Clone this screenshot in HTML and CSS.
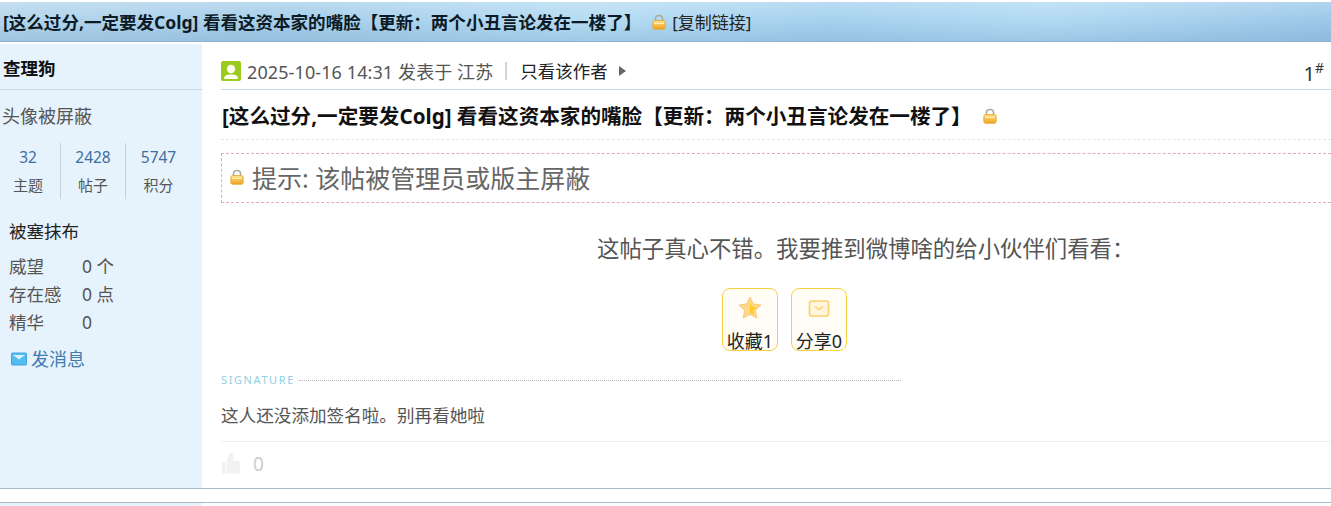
FILE: index.html
```html
<!DOCTYPE html>
<html lang="zh">
<head>
<meta charset="utf-8">
<title>看看这资本家的嘴脸</title>
<link rel="stylesheet" href="styles.css">
</head>
<body>
<svg class="defs" width="0" height="0" aria-hidden="true">
  <defs>
    <linearGradient id="lockg" x1="0" y1="0" x2="0" y2="1">
      <stop offset="0" stop-color="#ffe28a"/>
      <stop offset="1" stop-color="#f0a020"/>
    </linearGradient>
    <symbol id="lock" viewBox="0 0 14 16">
      <path d="M3.5 7V4.6C3.5 2.6 5 1.5 7 1.5s3.5 1.100 3.500 3.100V7" fill="none" stroke="#a9a9a0" stroke-width="1.600"/>
      <rect x=".8" y="6.500" width="12.400" height="8.800" rx="2" fill="url(#lockg)" stroke="#e8a22c" stroke-width=".8"/>
      <rect x="2" y="8.800" width="10" height="1" fill="#fff3c4"/>
    </symbol>
  </defs>
</svg>
<header class="topbar">
  <h1 class="topbar-title">[这么过分,一定要发Colg] 看看这资本家的嘴脸【更新：两个小丑言论发在一楼了】</h1>
  <svg class="lock lock-top"><use href="#lock"/></svg>
  <a class="copy">[复制链接]</a>
</header>
<main class="post">
  <aside class="side">
    <div class="author">查理狗</div>
    <div class="avatar">头像被屏蔽</div>
    <div class="stats">
      <div class="stat"><b>32</b><span>主题</span></div>
      <div class="stat"><b>2428</b><span>帖子</span></div>
      <div class="stat"><b>5747</b><span>积分</span></div>
    </div>
    <div class="rank">被塞抹布</div>
    <dl class="attrs">
      <dt>威望</dt><dd>0 个</dd>
      <dt>存在感</dt><dd>0 点</dd>
      <dt>精华</dt><dd>0</dd>
    </dl>
    <a class="pm">
      <svg class="pm-icon" viewBox="0 0 16 14"><rect x=".5" y="1" width="15" height="12" rx="1" fill="#53bdf0" stroke="#3fa6e0"/><path d="M2 3 8 7.500 14 3z" fill="#d9f3ff"/></svg>发消息
    </a>
  </aside>
  <section class="content">
    <div class="meta">
      <svg class="online" viewBox="0 0 20 20"><rect width="20" height="20" rx="2" fill="#9ccb1e"/><circle cx="10" cy="8" r="4.200" fill="#fdfef0"/><path d="M3 18c0-4 3.500-4.500 7-4.500s7 .5 7 4.500z" fill="#fdfef0"/></svg>
      <span class="meta-time">2025-10-16 14:31 发表于 江苏</span>
      <i class="meta-sep"></i>
      <a class="meta-only">只看该作者</a>
      <i class="meta-arrow"></i>
      <span class="floor">1<sup>#</sup></span>
    </div>
    <h2 class="post-title">[这么过分,一定要发Colg] 看看这资本家的嘴脸【更新：两个小丑言论发在一楼了】<svg class="lock lock-title"><use href="#lock"/></svg></h2>
    <div class="notice"><svg class="lock lock-notice"><use href="#lock"/></svg>提示: 该帖被管理员或版主屏蔽</div>
    <p class="share-text">这帖子真心不错。我要推到微博啥的给小伙伴们看看：</p>
    <div class="actions">
      <a class="action">
        <svg class="action-icon" viewBox="0 0 24 24"><path d="M12 1l3.300 7 7.700 1-5.600 5.300 1.400 7.700-6.800-3.700L5.200 22l1.400-7.700L1 9l7.700-1z" fill="#ffd98a" stroke="#f8c879"/><path d="M12 6l2 4.400 4.800.6-3.500 3.300.9 4.700-4.200-2.300z" fill="#ffc928"/></svg>
        <span>收藏1</span>
      </a>
      <a class="action">
        <svg class="action-icon" viewBox="0 0 24 24"><rect x="2.500" y="5" width="19" height="15" rx="2" fill="#fff6dc" stroke="#fbcf6b" stroke-width="1.600"/><path d="M8 10.500l4 3 4-3" fill="none" stroke="#fbcf6b" stroke-width="1.400"/></svg>
        <span>分享0</span>
      </a>
    </div>
    <div class="sig-head"><span class="sig-label">SIGNATURE</span><i class="sig-line"></i></div>
    <p class="sig-text">这人还没添加签名啦。别再看她啦</p>
    <div class="like">
      <svg class="thumb" viewBox="0 0 20 24"><path d="M1 11h4v12H1zM6 11l3-10c3 0 4 1 4 3v6h5c1 0 2 1 2 2v10c0 1-1 1-2 1H6z" fill="#f2f2f2"/></svg>
      <span>0</span>
    </div>
  </section>
</main>
<div class="next"><i class="next-line"></i></div>
</body>
</html>
```

FILE: styles.css
```css
* { box-sizing: border-box; }
html, body { margin: 0; padding: 0; }
body {
  width: 1331px;
  height: 506px;
  overflow: hidden;
  background: #fff;
  color: #333;
  font-family: "Noto Sans", "Noto Sans CJK SC", sans-serif;
  padding-top: 2px;
}
.defs { position: absolute; }
a { color: inherit; text-decoration: none; }

.topbar {
  height: 40px;
  display: flex;
  align-items: center;
  padding-left: 3px;
  background:
    linear-gradient(to bottom, rgba(255,255,255,.22), rgba(255,255,255,0) 45%, rgba(70,120,170,.18)),
    linear-gradient(110deg, #b5d6ec 0%, #a7cfea 22%, #b6dcf3 45%, #a6d2ef 62%, #b2daf3 78%, #9cc8e8 100%);
  border-bottom: 1px solid #8fb3cc;
}
.topbar-title { margin: 0; font-size: 17.550px; line-height: 24px; font-weight: 700; color: #0c1a26; white-space: nowrap; }
.lock { flex: none; }
.lock-top { width: 14px; height: 16px; margin-left: 11px; }
.copy { margin-left: 6px; font-size: 17px; color: #222; white-space: nowrap; }

.post { height: 445px; margin-top: 2px; display: flex; border-bottom: 1px solid #a9bac4; }
.side { width: 202px; flex: none; background: #e6f2fc; display: flex; flex-direction: column; }
.author { height: 46px; line-height: 48px; padding-left: 3px; font-size: 17.500px; font-weight: 700; color: #111; border-bottom: 1px solid #c8d6e2; }
.avatar { margin-top: 13px; padding-left: 2px; font-size: 18px; line-height: 26px; color: #555; }
.stats { margin-top: 14px; display: flex; }
.stat { width: 65px; height: 56px; display: flex; flex-direction: column; align-items: center; border-right: 1px solid #c8d0d8; }
.stat:first-child { width: 61px; padding-right: 4px; }
.stat:last-child { border-right: 0; }
.stat b { font-weight: 400; font-size: 15.500px; line-height: 28px; color: #3f6f9f; }
.stat span { font-size: 15px; line-height: 28px; color: #555; }
.rank { margin-top: 19px; padding-left: 9px; font-size: 17.500px; line-height: 26px; color: #222; }
.attrs { margin: 8px 0 0; padding-left: 9px; display: grid; grid-template-columns: 73px 1fr; font-size: 17.500px; line-height: 28px; color: #555; }
.attrs dt, .attrs dd { margin: 0; }
.pm { margin-top: 9px; padding-left: 11px; display: flex; align-items: center; gap: 4px; font-size: 18px; line-height: 28px; color: #3f7cb0; }
.pm-icon { width: 16px; height: 14px; }

.content { flex: 1; min-width: 0; padding-left: 19px; }
.meta { height: 46px; margin-right: -1px; display: flex; align-items: center; padding-top: 8px; border-bottom: 1px solid #c9d9e2; font-size: 18px; color: #555; white-space: nowrap; }
.online { width: 20px; height: 20px; margin-right: 6px; }
.meta-time { letter-spacing: .1px; }
.meta-sep { width: 2px; height: 18px; margin: 0 13px 0 12px; background: #d4d4d4; }
.meta-only { color: #222; font-size: 17.500px; }
.meta-arrow { margin-left: 11px; width: 0; height: 0; border-left: 7px solid #666; border-top: 5px solid transparent; border-bottom: 5px solid transparent; }
.floor { margin-left: auto; margin-right: 8px; padding-top: 5px; font-size: 20px; color: #333; }
.floor sup { font-size: 14px; line-height: 0; }
.post-title { margin: 0; height: 50px; display: flex; align-items: center; padding-left: 1px; font-size: 20.600px; font-weight: 700; color: #111; white-space: nowrap; border-bottom: 1px dashed #e6e6e6; }
.lock-title { width: 14px; height: 16px; margin-left: 11px; margin-top: 3px; }
.notice { margin-top: 13px; height: 50px; display: flex; align-items: center; padding: 0 0 2px 8px; font-size: 25px; color: #666; border: 1px dashed #eaa8b4; border-right: 0; }
.lock-notice { width: 14px; height: 16px; margin-right: 8px; }
.share-text { margin: 30px 0 0; padding-left: 376px; font-size: 22.400px; line-height: 32px; color: #555; white-space: nowrap; }
.actions { margin-top: 23px; padding-left: 501px; display: flex; gap: 13px; }
.action { width: 56px; height: 63px; padding-top: 7px; display: flex; flex-direction: column; align-items: center; border: 1px solid #f8d040; border-radius: 8px; background: #fffdf6; color: #222; font-size: 18px; line-height: 20px; white-space: nowrap; }
.action-icon { width: 24px; height: 24px; margin-bottom: 11px; flex: none; }
.sig-head { margin-top: 22px; display: flex; align-items: center; width: 680px; }
.sig-label { font-size: 11px; letter-spacing: 1.600px; color: #8fd0e6; line-height: 14px; }
.sig-line { flex: 1; margin-left: 4px; border-top: 1px dotted #b9b9b9; }
.sig-text { margin: 15px 0 0; font-size: 17.600px; line-height: 26px; color: #555; white-space: nowrap; }
.like { margin-top: 13px; height: 45px; padding-top: 9px; display: flex; align-items: flex-start; border-top: 1px solid #efefef; font-size: 19px; color: #ccc; }
.thumb { width: 19px; height: 24px; margin-right: 13px; }
.next { padding-top: 13px; }
.next-line { display: block; height: 1px; background: #a9bac4; }
.next::after { content: ""; display: block; width: 202px; height: 3px; background: #e6f2fc; }
```
